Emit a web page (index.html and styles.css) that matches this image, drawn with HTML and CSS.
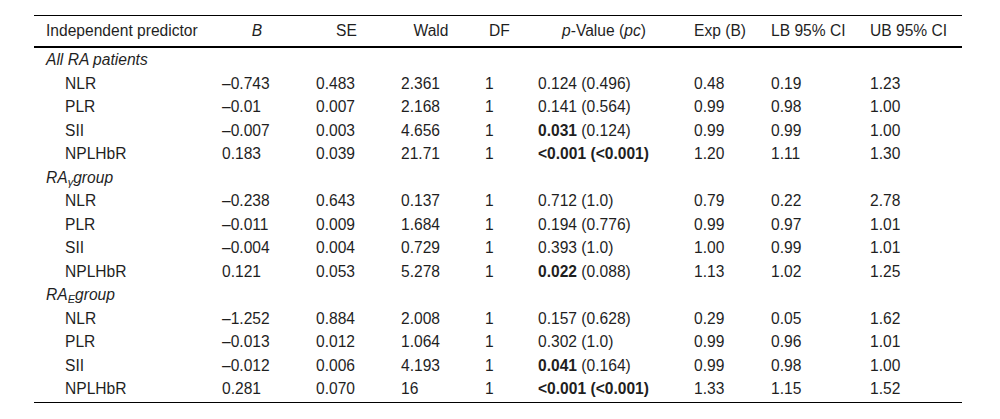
FILE: index.html
```html
<!DOCTYPE html>
<html>
<head>
<meta charset="utf-8">
<link rel="stylesheet" href="styles.css">
</head>
<body>
<div class="wrap">
<table class="stats">
<colgroup>
<col class="c1"><col class="c2"><col class="c3"><col class="c4"><col class="c5"><col class="c6"><col class="c7"><col class="c8"><col class="c9">
</colgroup>
<thead>
<tr>
<th class="first">Independent predictor</th>
<th><i>B</i></th>
<th>SE</th>
<th>Wald</th>
<th>DF</th>
<th><i>p</i>-Value (<i>pc</i>)</th>
<th class="left">Exp (B)</th>
<th class="left">LB 95% CI</th>
<th class="left">UB 95% CI</th>
</tr>
</thead>
<tbody>
<tr class="group"><td colspan="9"><i>All RA patients</i></td></tr>
<tr><td class="ind">NLR</td><td>–0.743</td><td>0.483</td><td>2.361</td><td>1</td><td>0.124 (0.496)</td><td>0.48</td><td>0.19</td><td>1.23</td></tr>
<tr><td class="ind">PLR</td><td>–0.01</td><td>0.007</td><td>2.168</td><td>1</td><td>0.141 (0.564)</td><td>0.99</td><td>0.98</td><td>1.00</td></tr>
<tr><td class="ind">SII</td><td>–0.007</td><td>0.003</td><td>4.656</td><td>1</td><td><b>0.031</b> (0.124)</td><td>0.99</td><td>0.99</td><td>1.00</td></tr>
<tr><td class="ind">NPLHbR</td><td>0.183</td><td>0.039</td><td>21.71</td><td>1</td><td><b>&lt;0.001 (&lt;0.001)</b></td><td>1.20</td><td>1.11</td><td>1.30</td></tr>
<tr class="group"><td colspan="9"><i>RA<sub>γ</sub>group</i></td></tr>
<tr><td class="ind">NLR</td><td>–0.238</td><td>0.643</td><td>0.137</td><td>1</td><td>0.712 (1.0)</td><td>0.79</td><td>0.22</td><td>2.78</td></tr>
<tr><td class="ind">PLR</td><td>–0.011</td><td>0.009</td><td>1.684</td><td>1</td><td>0.194 (0.776)</td><td>0.99</td><td>0.97</td><td>1.01</td></tr>
<tr><td class="ind">SII</td><td>–0.004</td><td>0.004</td><td>0.729</td><td>1</td><td>0.393 (1.0)</td><td>1.00</td><td>0.99</td><td>1.01</td></tr>
<tr><td class="ind">NPLHbR</td><td>0.121</td><td>0.053</td><td>5.278</td><td>1</td><td><b>0.022</b> (0.088)</td><td>1.13</td><td>1.02</td><td>1.25</td></tr>
<tr class="group"><td colspan="9"><i>RA<sub>E</sub>group</i></td></tr>
<tr><td class="ind">NLR</td><td>–1.252</td><td>0.884</td><td>2.008</td><td>1</td><td>0.157 (0.628)</td><td>0.29</td><td>0.05</td><td>1.62</td></tr>
<tr><td class="ind">PLR</td><td>–0.013</td><td>0.012</td><td>1.064</td><td>1</td><td>0.302 (1.0)</td><td>0.99</td><td>0.96</td><td>1.01</td></tr>
<tr><td class="ind">SII</td><td>–0.012</td><td>0.006</td><td>4.193</td><td>1</td><td><b>0.041</b> (0.164)</td><td>0.99</td><td>0.98</td><td>1.00</td></tr>
<tr class="last"><td class="ind">NPLHbR</td><td>0.281</td><td>0.070</td><td>16</td><td>1</td><td><b>&lt;0.001 (&lt;0.001)</b></td><td>1.33</td><td>1.15</td><td>1.52</td></tr>
</tbody>
</table>
</div>
</body>
</html>
```
FILE: styles.css
```css
html, body {
  margin: 0;
  padding: 0;
  background: #fff;
}
.wrap {
  padding: 15px 0 0 34px;
}
.stats {
  border-collapse: collapse;
  table-layout: fixed;
  width: 928px;
  font-family: "Liberation Sans", Arial, sans-serif;
  font-size: 15.6px;
  color: #1f1f1f;
  border-top: 1px solid #000;
  border-bottom: 1px solid #000;
}
.c1 { width: 176px; }
.c2 { width: 94px; }
.c3 { width: 85px; }
.c4 { width: 84px; }
.c5 { width: 53px; }
.c6 { width: 156px; }
.c7 { width: 77px; }
.c8 { width: 99px; }
.c9 { width: 104px; }
.stats th {
  font-weight: normal;
  text-align: center;
  padding: 6px 12px 6px;
  line-height: 18px;
  white-space: nowrap;
  border-bottom: 2px solid #000;
}
.stats th.first, .stats th.left {
  text-align: left;
}
.stats td {
  text-align: left;
  padding: 3px 12px;
  line-height: 17.5px;
  white-space: nowrap;
}
.stats td.ind {
  padding-left: 31px;
}
.stats tr.group td {
  padding-top: 3px;
  padding-bottom: 3px;
}
.stats sub {
  font-size: 11px;
  vertical-align: -3px;
  line-height: 0;
}
.stats tr.last td {
  padding-bottom: 4px;
}
.stats b {
  font-weight: bold;
}
```
